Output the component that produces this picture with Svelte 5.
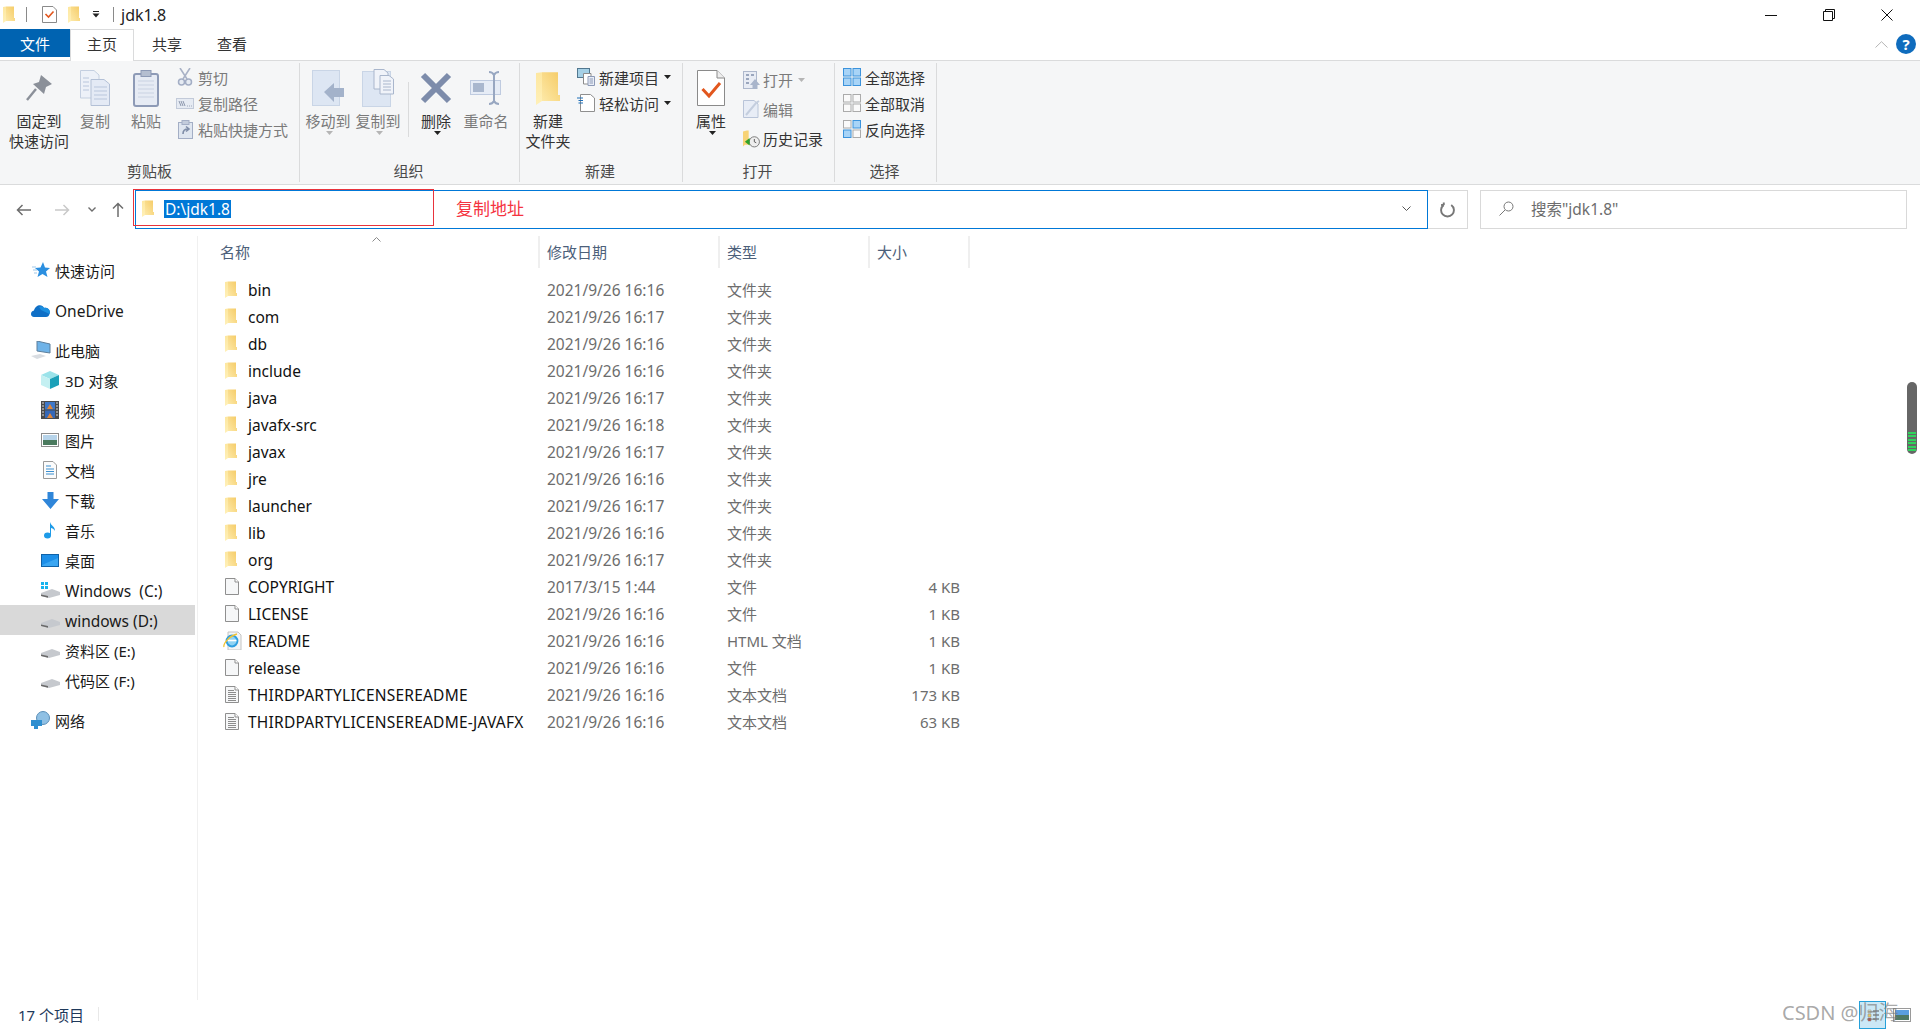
<script>
  const clipSmall = [
    { icon: 'scissors', text: '剪切' },
    { icon: 'copypath', text: '复制路径' },
    { icon: 'shortcut', text: '粘贴快捷方式' }
  ];

  const nav = [
    { icon: 'star', text: '快速访问', top: true },
    { icon: 'cloud', text: 'OneDrive', top: true, gap: true, latin: true },
    { icon: 'pc', text: '此电脑', top: true, gap: true },
    { icon: 'cube', text: '3D 对象' },
    { icon: 'film', text: '视频' },
    { icon: 'photo', text: '图片' },
    { icon: 'navdoc', text: '文档' },
    { icon: 'download', text: '下载' },
    { icon: 'music', text: '音乐' },
    { icon: 'desktop', text: '桌面' },
    { icon: 'cdrive', text: 'Windows  (C:)', latin: true },
    { icon: 'drive', text: 'windows (D:)', active: true, latin: true },
    { icon: 'drive', text: '资料区 (E:)' },
    { icon: 'drive', text: '代码区 (F:)' },
    { icon: 'network', text: '网络', top: true, gap: true }
  ];

  const files = [
    { name: 'bin', date: '2021/9/26 16:16', type: '文件夹', size: '', icon: 'folder' },
    { name: 'com', date: '2021/9/26 16:17', type: '文件夹', size: '', icon: 'folder' },
    { name: 'db', date: '2021/9/26 16:16', type: '文件夹', size: '', icon: 'folder' },
    { name: 'include', date: '2021/9/26 16:16', type: '文件夹', size: '', icon: 'folder' },
    { name: 'java', date: '2021/9/26 16:17', type: '文件夹', size: '', icon: 'folder' },
    { name: 'javafx-src', date: '2021/9/26 16:18', type: '文件夹', size: '', icon: 'folder' },
    { name: 'javax', date: '2021/9/26 16:17', type: '文件夹', size: '', icon: 'folder' },
    { name: 'jre', date: '2021/9/26 16:16', type: '文件夹', size: '', icon: 'folder' },
    { name: 'launcher', date: '2021/9/26 16:17', type: '文件夹', size: '', icon: 'folder' },
    { name: 'lib', date: '2021/9/26 16:16', type: '文件夹', size: '', icon: 'folder' },
    { name: 'org', date: '2021/9/26 16:17', type: '文件夹', size: '', icon: 'folder' },
    { name: 'COPYRIGHT', date: '2017/3/15 1:44', type: '文件', size: '4 KB', icon: 'blank' },
    { name: 'LICENSE', date: '2021/9/26 16:16', type: '文件', size: '1 KB', icon: 'blank' },
    { name: 'README', date: '2021/9/26 16:16', type: 'HTML 文档', size: '1 KB', icon: 'ie' },
    { name: 'release', date: '2021/9/26 16:16', type: '文件', size: '1 KB', icon: 'blank' },
    { name: 'THIRDPARTYLICENSEREADME', date: '2021/9/26 16:16', type: '文本文档', size: '173 KB', icon: 'text' },
    { name: 'THIRDPARTYLICENSEREADME-JAVAFX', date: '2021/9/26 16:16', type: '文本文档', size: '63 KB', icon: 'text' }
  ];
</script>

{#snippet folder(w, h)}
  <svg width={w} height={h} viewBox="0 0 12 17">
    <path d="M3 0.6 H11 V12 H12 V15 H3 Z" fill="url(#folderBody)" />
    <path d="M0 1 L3 0.6 V15 L0 17 Z" fill="url(#folderFill)" />
  </svg>
{/snippet}

{#snippet fileIcon(kind)}
  {#if kind === 'folder'}
    <span class="slot-pad">{@render folder(12, 17)}</span>
  {:else if kind === 'ie'}
    <svg width="19" height="19" viewBox="0 0 19 19">
      <path d="M5 1 H15 L18 4 V19 H5 Z" fill="#f4f5f6" stroke="#c4c4c4" />
      <circle cx="9" cy="10" r="5.4" fill="#8fd3f4" stroke="#2f9fe0" stroke-width="2" />
      <path d="M4.5 9.5 H13.5" stroke="#fff" stroke-width="1.6" />
      <path d="M1 16 C0 13 6 5 14 3" fill="none" stroke="#f2c230" stroke-width="1.3" />
    </svg>
  {:else}
    <svg class="slot-pad" width="14" height="17" viewBox="0 0 14 17">
      <path d="M0.5 0.5 H10 L13.5 4 V16.5 H0.5 Z" fill="#f6f7f8" stroke="#8f8f8f" />
      <path d="M10 0.5 V4 H13.5" fill="#fff" stroke="#8f8f8f" />
      {#if kind === 'text'}
        <path d="M3 4.5 H9 M3 6.5 H11 M3 8.5 H11 M3 10.5 H11 M3 12.5 H11 M3 14.5 H11" stroke="#8c8c8c" />
      {/if}
    </svg>
  {/if}
{/snippet}

{#snippet smallIcon(kind)}
  {#if kind === 'scissors'}
    <svg width="16" height="18" viewBox="0 0 16 18">
      <path d="M3 0 L10 11 M13 0 L6 11" stroke="#a9b2c6" stroke-width="1.6" fill="none" />
      <circle cx="4.5" cy="14" r="3" fill="#e6ebf3" stroke="#a3aec5" stroke-width="1.5" />
      <circle cx="11.5" cy="14" r="3" fill="#e6ebf3" stroke="#a3aec5" stroke-width="1.5" />
    </svg>
  {:else if kind === 'copypath'}
    <svg width="18" height="11" viewBox="0 0 18 11">
      <rect x="0.5" y="0.5" width="17" height="10" fill="#e6ebf3" stroke="#c2cad9" />
      <path d="M3 3 L5 8 M5 3 L7 8 M7 3 L9 8 M11 8 H11.8 M13 8 H13.8 M15 8 H15.8" stroke="#8c97ad" />
    </svg>
  {:else if kind === 'shortcut'}
    <svg width="15" height="19" viewBox="0 0 15 19">
      <rect x="0.5" y="2.5" width="14" height="16" fill="#dfe6f0" stroke="#a3aec5" />
      <rect x="4" y="0.5" width="7" height="4" fill="#c3ccdc" stroke="#a3aec5" />
      <path d="M5 14 C5 10 7 9 10 9 M8 6.5 L11 9 L8 11.5" fill="none" stroke="#7f8da8" stroke-width="1.6" />
    </svg>
  {:else if kind === 'newitem'}
    <svg width="18" height="18" viewBox="0 0 18 18">
      <rect x="0.5" y="0.5" width="12" height="9" fill="#a5d0e6" stroke="#51778f" />
      <path d="M6.5 5.5 H14 V16 H6.5 Z" fill="#fff" stroke="#8b8b8b" />
      <path d="M11 8.5 H17.5 V17.5 H11 Z" fill="#e8edf7" stroke="#8d9ab6" />
      <path d="M12.5 11 H16 M12.5 13 H16 M12.5 15 H16" stroke="#8d9ab6" />
    </svg>
  {:else if kind === 'easy'}
    <svg width="18" height="18" viewBox="0 0 18 18">
      <path d="M3.5 0.5 H13.5 L17.5 4 V17.5 H3.5 Z" fill="#fff" stroke="#8f8f8f" />
      <path d="M0 4 H6 M1.5 6.5 H6 M1.5 9 H6" stroke="#1f6fb8" stroke-width="1.2" />
    </svg>
  {:else if kind === 'open'}
    <svg width="17" height="18" viewBox="0 0 17 18">
      <rect x="0.5" y="0.5" width="13" height="17" fill="#e8ecf4" stroke="#aeb8cc" />
      <path d="M3 4 H6 M8 4 H11 M3 8 H6 M3 12 H6" stroke="#9aa6bd" stroke-width="2" />
      <path d="M7 14 L12 8 L17 14 H14.5 V18 H9.5 V14 Z" fill="#a9b5cb" />
    </svg>
  {:else if kind === 'edit'}
    <svg width="17" height="18" viewBox="0 0 17 18">
      <path d="M0.5 0.5 H11 L15 4 V17.5 H0.5 Z" fill="#e8edf6" stroke="#b9c4d8" />
      <path d="M3 15 L13 3 L16 1" fill="none" stroke="#c4cede" stroke-width="2" />
    </svg>
  {:else if kind === 'history'}
    <svg width="18" height="18" viewBox="0 0 18 18">
      <path d="M0 1 L4 0 H6 V9 H9 V15 H2 L0 17 Z" fill="#f7d376" />
      <circle cx="12" cy="12" r="5.4" fill="#eeeeee" stroke="#777" />
      <path d="M12 9 V12 L14 13" fill="none" stroke="#555" />
      <path d="M2 12 L7 8 V16 Z" fill="#2fa32a" />
    </svg>
  {:else if kind === 'all' || kind === 'none' || kind === 'invert'}
    <svg width="18" height="18" viewBox="0 0 18 18">
      <rect class:on={kind === 'all'} class:off={kind !== 'all'} x="0.5" y="0.5" width="7.5" height="7.5" />
      <rect class:on={kind === 'all' || kind === 'invert'} class:off={kind === 'none'} x="10" y="0.5" width="7.5" height="7.5" />
      <rect class:on={kind === 'all' || kind === 'invert'} class:off={kind === 'none'} x="0.5" y="10" width="7.5" height="7.5" />
      <rect class:on={kind === 'all'} class:off={kind !== 'all'} x="10" y="10" width="7.5" height="7.5" />
    </svg>
  {/if}
{/snippet}

{#snippet navIcon(kind)}
  {#if kind === 'star'}
    <svg width="18" height="16" viewBox="0 0 18 16">
      <path d="M11 0 L13 5.5 L18 6 L14 9.5 L15.5 15 L10.5 12 L5.5 15 L7 9.5 L3 6 L8.5 5.5 Z" fill="#2b8fe0" />
      <path d="M0 5 H4 M1 8 H5 M2 11 H5" stroke="#9fc7e8" />
    </svg>
  {:else if kind === 'cloud'}
    <svg width="20" height="13" viewBox="0 0 20 13">
      <path d="M3 13 C-1 13 -1 7 3 6.5 C4 1 11 -1 13 4 C17 3 20 7 18.5 10 C18 12 17 13 15 13 Z" fill="#0f6fc6" />
      <path d="M8 3 C10 1.5 12 2.5 13 4 C17 3 20 7 18.5 10 L10 6 Z" fill="#1c8fe0" />
    </svg>
  {:else if kind === 'pc'}
    <svg width="20" height="18" viewBox="0 0 20 18">
      <path d="M6 0 L19 3 V12 L6 10 Z" fill="#6fb3e8" stroke="#5d7f9c" />
      <path d="M0 15 L9 13 L15 15 L6 18 Z" fill="#d9dde2" />
    </svg>
  {:else if kind === 'cube'}
    <svg width="18" height="18" viewBox="0 0 18 18">
      <path d="M9 0 L18 4 L9 8 L0 4 Z" fill="#9be3ea" />
      <path d="M0 4 L9 8 V18 L0 14 Z" fill="#c4f0f2" />
      <path d="M18 4 L9 8 V18 L18 14 Z" fill="#1ba0b8" />
    </svg>
  {:else if kind === 'film'}
    <svg width="18" height="18" viewBox="0 0 18 18">
      <rect width="18" height="18" fill="#4a4a4a" />
      <rect x="4" y="1" width="10" height="7.5" fill="#3f78c8" />
      <rect x="4" y="9.5" width="10" height="7.5" fill="#3568b8" />
      <path d="M6 8 L9 3 L12 8 Z M6 17 L9 12 L12 17 Z" fill="#e0863a" />
      <path d="M1 2 H3 M1 5 H3 M1 8 H3 M1 11 H3 M1 14 H3 M15 2 H17 M15 5 H17 M15 8 H17 M15 11 H17 M15 14 H17" stroke="#ddd" />
    </svg>
  {:else if kind === 'photo'}
    <svg width="18" height="14" viewBox="0 0 18 14">
      <rect x="0.5" y="0.5" width="17" height="13" fill="#fff" stroke="#8d8d8d" />
      <rect x="2" y="2" width="14" height="5" fill="#b7d4ea" />
      <rect x="2" y="7" width="14" height="5" fill="#4a7a5e" />
    </svg>
  {:else if kind === 'navdoc'}
    <svg width="14" height="18" viewBox="0 0 14 18">
      <path d="M0.5 0.5 H10 L13.5 4 V17.5 H0.5 Z" fill="#fbfbfb" stroke="#9a9a9a" />
      <path d="M3 5 H8 M3 8 H11 M3 10.5 H11 M3 13 H11" stroke="#3a8fd0" />
    </svg>
  {:else if kind === 'download'}
    <svg width="17" height="17" viewBox="0 0 17 17">
      <path d="M5.5 0 H11.5 V7 H17 L8.5 17 L0 7 H5.5 Z" fill="#2f86d9" />
    </svg>
  {:else if kind === 'music'}
    <svg width="12" height="17" viewBox="0 0 12 17">
      <ellipse cx="3.5" cy="13.5" rx="3.5" ry="3" fill="#1d9be8" />
      <path d="M6 13 V0 C7 4 11 4 11 9 C10 7 8 6 7 6 V13 Z" fill="#1d9be8" />
    </svg>
  {:else if kind === 'desktop'}
    <svg width="18" height="13" viewBox="0 0 18 13">
      <rect x="0.5" y="0.5" width="17" height="12" fill="#1d8fe8" stroke="#0f62a8" />
      <path d="M1 11 L17 4 V12 H1 Z" fill="#3aa6f2" />
    </svg>
  {:else if kind === 'cdrive' || kind === 'drive'}
    <svg width="19" height="16" viewBox="0 0 19 16">
      {#if kind === 'cdrive'}
        <path d="M0 0 H3 V3 H0 Z M4 0 H7 V3 H4 Z M0 4 H3 V7 H0 Z M4 4 H7 V7 H4 Z" fill="#17b4ee" />
      {/if}
      <path d="M0 11 L11 7 L19 10 V13 L8 16 L0 14 Z" fill="#c6c9ce" />
      <path d="M0 12.5 L7 14 V15.8 L0 14 Z" fill="#6a6a6a" />
    </svg>
  {:else if kind === 'network'}
    <svg width="20" height="18" viewBox="0 0 20 18">
      <circle cx="12" cy="7" r="6.5" fill="#8fc0e4" stroke="#5b8fb8" />
      <path d="M0 9 H11 V15 H7 V18 H3 V15 H0 Z" fill="#2f8fd0" />
    </svg>
  {/if}
{/snippet}

<svg class="defs" width="0" height="0" aria-hidden="true">
  <defs>
    <linearGradient id="folderFill" x1="0" y1="1" x2="0" y2="0">
      <stop offset="0" stop-color="#fff0b8" />
      <stop offset="1" stop-color="#fde7a0" />
    </linearGradient>
    <linearGradient id="folderBody" x1="0" y1="1" x2="1" y2="0">
      <stop offset="0" stop-color="#fde9a8" />
      <stop offset="1" stop-color="#f5cb66" />
    </linearGradient>
  </defs>
</svg>

<div class="window">
  <div class="titlebar">
    <span class="qa first">{@render folder(12, 17)}</span>
    <i class="qa-sep"></i>
    <svg class="qa-check" width="15" height="17" viewBox="0 0 15 17">
      <path d="M0.5 0.5 H11 L14.5 4 V16.5 H0.5 Z" fill="#fff" stroke="#8a8a8a" />
      <path d="M3.5 8 L6.5 11 L11.5 5.5" fill="none" stroke="#e2571e" stroke-width="1.6" />
    </svg>
    <span class="qa second">{@render folder(12, 17)}</span>
    <svg class="qa-drop" width="8" height="7" viewBox="0 0 8 7">
      <path d="M1 0.5 H7" stroke="#222" />
      <path d="M0.5 2.5 H7.5 L4 6.5 Z" fill="#222" />
    </svg>
    <i class="qa-sep last"></i>
    <span class="title">jdk1.8</span>
    <div class="win-controls">
      <svg width="12" height="12" viewBox="0 0 12 12"><path d="M0 6.5 H12" stroke="#111" /></svg>
      <svg width="12" height="12" viewBox="0 0 12 12">
        <path d="M0.5 2.5 H9.5 V11.5 H0.5 Z M2.5 2.5 V0.5 H11.5 V9.5 H9.5" fill="none" stroke="#111" />
      </svg>
      <svg width="12" height="12" viewBox="0 0 12 12"><path d="M0.5 0.5 L11.5 11.5 M11.5 0.5 L0.5 11.5" stroke="#111" /></svg>
    </div>
  </div>

  <div class="tabs">
    <span class="tab file">文件</span>
    <span class="tab home">主页</span>
    <span class="tab share">共享</span>
    <span class="tab view">查看</span>
    <svg class="collapse" width="13" height="7" viewBox="0 0 13 7">
      <path d="M0.5 6.5 L6.5 0.7 L12.5 6.5" fill="none" stroke="#b5b5b5" />
    </svg>
    <span class="help">?</span>
  </div>

  <div class="ribbon">
    <section class="group clipboard">
      <div class="body">
        <div class="big pin">
          <div class="ico">
            <svg width="26" height="26" viewBox="0 0 26 26">
              <path d="M15 0 L26 9 L20 12 L18 19 L7 9 L13 7 Z" fill="#8b9099" />
              <path d="M10 14 L1 25" stroke="#8b9099" stroke-width="2.4" />
            </svg>
          </div>
          <span>固定到<br />快速访问</span>
        </div>
        <div class="big copy off-text">
          <div class="ico">
            <svg width="30" height="36" viewBox="0 0 30 36">
              <path d="M0.5 0.5 H14 L19 5 V28 H0.5 Z" fill="#edf1f8" stroke="#c4cfe0" />
              <path d="M11 9.5 H24 L29.5 14 V35.5 H11 Z" fill="#e4eaf5" stroke="#b3c0d6" />
              <path d="M3 8 H9 M3 12 H9 M3 16 H9 M3 20 H9 M14 17 H27 M14 21 H27 M14 25 H27 M14 29 H27" stroke="#b9c6dc" />
            </svg>
          </div>
          <span>复制</span>
        </div>
        <div class="big paste off-text">
          <div class="ico">
            <svg width="26" height="37" viewBox="0 0 26 37">
              <rect x="1" y="4" width="24" height="32" rx="2" fill="#e6ebf4" stroke="#8d9ab6" stroke-width="2" />
              <rect x="8" y="0.5" width="10" height="6" fill="#b4bed0" stroke="#8d9ab6" />
              <path d="M5 11 H21 M5 15 H21 M5 19 H21 M5 23 H21 M5 27 H21" stroke="#c9d2e2" />
            </svg>
          </div>
          <span>粘贴</span>
        </div>
        <div class="smalls clip-col off-text">
          {#each clipSmall as s}
            <div class="small">
              <span class="small-ico">{@render smallIcon(s.icon)}</span>
              <span>{s.text}</span>
            </div>
          {/each}
        </div>
      </div>
      <div class="group-label">剪贴板</div>
    </section>

    <section class="group organize">
      <div class="body">
        <div class="big wide off-text">
          <div class="ico">
            <svg width="32" height="36" viewBox="0 0 32 36">
              <rect x="0.5" y="0.5" width="27" height="35" fill="#dde6f3" stroke="#c9d5e6" />
              <path d="M12 22 L22 13 V18 H32 V27 H22 V32 Z" fill="#a3b2ca" />
            </svg>
          </div>
          <span>移动到</span>
          <svg class="caret light" width="7" height="4" viewBox="0 0 7 4"><path d="M0 0 H7 L3.5 4 Z" /></svg>
        </div>
        <div class="big wide off-text">
          <div class="ico">
            <svg width="32" height="38" viewBox="0 0 32 38">
              <rect x="0.5" y="2.5" width="28" height="35" fill="#dde6f3" stroke="#c9d5e6" />
              <path d="M12 0.5 H22 L26 4 V20 H12 Z" fill="#f0f3f9" stroke="#a9b6cc" />
              <path d="M18 6.5 H27 L31.5 10 V25 H18 Z" fill="#f0f3f9" stroke="#a9b6cc" />
              <path d="M21 12 H29 M21 15 H29 M21 18 H29 M21 21 H29" stroke="#a9b6cc" />
            </svg>
          </div>
          <span>复制到</span>
          <svg class="caret light" width="7" height="4" viewBox="0 0 7 4"><path d="M0 0 H7 L3.5 4 Z" /></svg>
        </div>
        <i class="inner-sep"></i>
        <div class="big wide">
          <div class="ico">
            <svg width="32" height="32" viewBox="0 0 32 32">
              <path d="M3 3 L29 29 M29 3 L3 29" stroke="#7d8cab" stroke-width="6" />
            </svg>
          </div>
          <span>删除</span>
          <svg class="caret" width="7" height="4" viewBox="0 0 7 4"><path d="M0 0 H7 L3.5 4 Z" /></svg>
        </div>
        <div class="big wide off-text">
          <div class="ico">
            <svg width="32" height="34" viewBox="0 0 32 34">
              <rect x="0.5" y="9.5" width="30" height="14" fill="#e6ecf6" stroke="#bfcbe0" />
              <rect x="3" y="12" width="11" height="9" fill="#a9b7ce" />
              <path d="M19 1 C22 1 23 2 24 4 C25 2 26 1 29 1 M24 4 V30 M19 33 C22 33 23 32 24 30 C25 32 26 33 29 33" fill="none" stroke="#98a7c1" stroke-width="2" />
            </svg>
          </div>
          <span>重命名</span>
        </div>
      </div>
      <div class="group-label">组织</div>
    </section>

    <section class="group new">
      <div class="body">
        <div class="big wide">
          <div class="ico">{@render folder(24, 34)}</div>
          <span>新建<br />文件夹</span>
        </div>
        <div class="smalls new-col">
          <div class="small">
            <span class="small-ico">{@render smallIcon('newitem')}</span>
            <span>新建项目</span>
            <svg class="drop" width="7" height="4" viewBox="0 0 7 4"><path d="M0 0 H7 L3.5 4 Z" /></svg>
          </div>
          <div class="small">
            <span class="small-ico">{@render smallIcon('easy')}</span>
            <span>轻松访问</span>
            <svg class="drop" width="7" height="4" viewBox="0 0 7 4"><path d="M0 0 H7 L3.5 4 Z" /></svg>
          </div>
        </div>
      </div>
      <div class="group-label">新建</div>
    </section>

    <section class="group open">
      <div class="body">
        <div class="big wide">
          <div class="ico">
            <svg width="28" height="36" viewBox="0 0 28 36">
              <path d="M0.5 0.5 H20 L27.5 8 V35.5 H0.5 Z" fill="#fff" stroke="#8a8a8a" />
              <path d="M20 0.5 V8 H27.5" fill="#eee" stroke="#8a8a8a" />
              <path d="M5.5 19 L12 26 L23 13" fill="none" stroke="#e2571e" stroke-width="3" />
            </svg>
          </div>
          <span>属性</span>
          <svg class="caret" width="7" height="4" viewBox="0 0 7 4"><path d="M0 0 H7 L3.5 4 Z" /></svg>
        </div>
        <div class="smalls open-col">
          <div class="small off-text">
            <span class="small-ico">{@render smallIcon('open')}</span>
            <span>打开</span>
            <svg class="drop light" width="7" height="4" viewBox="0 0 7 4"><path d="M0 0 H7 L3.5 4 Z" /></svg>
          </div>
          <div class="small off-text">
            <span class="small-ico">{@render smallIcon('edit')}</span>
            <span>编辑</span>
          </div>
          <div class="small">
            <span class="small-ico">{@render smallIcon('history')}</span>
            <span>历史记录</span>
          </div>
        </div>
      </div>
      <div class="group-label">打开</div>
    </section>

    <section class="group select">
      <div class="body">
        <div class="smalls select-col">
          <div class="small"><span class="small-ico">{@render smallIcon('all')}</span><span>全部选择</span></div>
          <div class="small"><span class="small-ico">{@render smallIcon('none')}</span><span>全部取消</span></div>
          <div class="small"><span class="small-ico">{@render smallIcon('invert')}</span><span>反向选择</span></div>
        </div>
      </div>
      <div class="group-label">选择</div>
    </section>
  </div>

  <div class="addressbar">
    <div class="nav-btns">
      <svg width="16" height="12" viewBox="0 0 16 12"><path d="M15 6 H1.5 M6.5 1 L1.5 6 L6.5 11" fill="none" stroke="#6d6d6d" stroke-width="1.5" /></svg>
      <svg width="16" height="12" viewBox="0 0 16 12"><path d="M1 6 H14.5 M9.5 1 L14.5 6 L9.5 11" fill="none" stroke="#c9c9c9" stroke-width="1.5" /></svg>
      <svg width="8" height="5" viewBox="0 0 8 5"><path d="M0.5 0.5 L4 4 L7.5 0.5" fill="none" stroke="#6d6d6d" stroke-width="1.4" /></svg>
      <svg width="12" height="15" viewBox="0 0 12 15"><path d="M6 15 V1.5 M1 6.5 L6 1.5 L11 6.5" fill="none" stroke="#6d6d6d" stroke-width="1.5" /></svg>
    </div>
    <div class="address">
      {@render folder(12, 17)}
      <span class="path">D:\jdk1.8</span>
      <span class="note">复制地址</span>
      <svg class="addr-drop" width="9" height="5" viewBox="0 0 9 5"><path d="M0.5 0.5 L4.5 4.5 L8.5 0.5" fill="none" stroke="#555" /></svg>
      <i class="red-box"></i>
    </div>
    <div class="refresh">
      <svg width="15" height="16" viewBox="0 0 14 15">
        <path d="M3.5 2.8 A6 6 0 1 0 10.5 2.8 M10.5 2.8 V0.5 M10.5 2.8 H13" fill="none" stroke="#777" stroke-width="1.8" transform="scale(-1 1) translate(-14 0)" />
      </svg>
    </div>
    <div class="search">
      <svg width="15" height="15" viewBox="0 0 15 15">
        <circle cx="9.5" cy="5.5" r="4.5" fill="none" stroke="#777" />
        <path d="M6 9 L0.5 14.5" stroke="#777" />
      </svg>
      <span>搜索"jdk1.8"</span>
    </div>
  </div>

  <div class="main">
    <aside class="sidebar">
      {#each nav as item}
        <div class="nav-item" class:top={item.top} class:gap={item.gap} class:active={item.active}>
          <span class="nav-ico">{@render navIcon(item.icon)}</span>
          <span class="nav-text" class:latin={item.latin}>{item.text}</span>
        </div>
      {/each}
    </aside>
    <div class="list">
      <div class="cols head">
        <span class="hcell name-h">名称</span>
        <span class="hcell">修改日期</span>
        <span class="hcell">类型</span>
        <span class="hcell">大小</span>
        <svg class="sort" width="9" height="5" viewBox="0 0 9 5"><path d="M0.5 4.5 L4.5 0.5 L8.5 4.5" fill="none" stroke="#8a8a8a" /></svg>
      </div>
      <div class="rows">
        {#each files as f}
          <div class="cols row">
            <div class="name">
              <span class="slot">{@render fileIcon(f.icon)}</span>
              <span class:long={f.icon === 'text'}>{f.name}</span>
            </div>
            <span class="meta date">{f.date}</span>
            <span class="meta">{f.type}</span>
            <span class="meta size">{f.size}</span>
          </div>
        {/each}
      </div>
    </div>
  </div>

  <div class="statusbar">
    <span>17 个项目</span>
    <i class="status-sep"></i>
    <span class="view-details">
      <svg width="14" height="16" viewBox="0 0 14 16">
        <path d="M2 3 H5 V6 H2 Z" fill="#d9e3c0" stroke="#999" stroke-width="0.6" />
        <path d="M2 7 H5 V10 H2 Z" fill="#e8c860" stroke="#999" stroke-width="0.6" />
        <path d="M2 11 H5 V14 H2 Z" fill="#c8342a" stroke="#999" stroke-width="0.6" />
        <path d="M7 4 H13 M7 8 H13 M7 12 H13" stroke="#555" />
      </svg>
    </span>
    <svg class="view-thumbs" width="18" height="14" viewBox="0 0 18 14">
      <rect x="0.5" y="0.5" width="17" height="13" fill="#fff" stroke="#9a9a9a" />
      <rect x="2" y="2" width="14" height="5" fill="#5a9fe0" />
      <rect x="2" y="7" width="14" height="5" fill="#4f7a66" />
    </svg>
    <span class="watermark">CSDN @归海</span>
  </div>

  <div class="scroll-pill">
    <div class="stripes"></div>
  </div>
</div>

<style>
  :global(body) {
    margin: 0;
    background: #fff;
  }

  .defs {
    position: absolute;
  }

  .window {
    position: relative;
    display: flex;
    flex-direction: column;
    height: 1030px;
    overflow: hidden;
    font-family: "Noto Sans", "Noto Sans CJK SC", sans-serif;
    font-size: 15px;
    color: #1a1a1a;
    background: #fff;
  }

  i {
    display: block;
  }

  .titlebar {
    display: flex;
    align-items: center;
    height: 29px;
    flex: none;
  }

  .qa {
    display: flex;
  }

  .first {
    margin-left: 3px;
  }

  .qa-sep {
    width: 1px;
    height: 15px;
    background: #8a8a8a;
    margin-left: 11px;
  }

  .qa-check {
    margin-left: 15px;
  }

  .second {
    margin-left: 11px;
  }

  .qa-drop {
    margin-left: 12px;
  }

  .qa-sep.last {
    margin-left: 13px;
  }

  .title {
    margin-left: 7px;
    font-size: 16px;
    color: #222;
  }

  .win-controls {
    margin-left: auto;
    display: flex;
    gap: 46px;
    padding-right: 27px;
  }

  .tabs {
    position: relative;
    display: flex;
    height: 31px;
    flex: none;
  }

  .tab {
    display: flex;
    align-items: center;
    justify-content: center;
    height: 28px;
    color: #333;
  }

  .file {
    width: 70px;
    background: #0063b1;
    color: #fff;
  }

  .home {
    width: 64px;
    height: 32px;
    box-sizing: border-box;
    padding-bottom: 4px;
    border: 1px solid #dadbdc;
    border-bottom: 0;
    background: #fff;
    position: relative;
    z-index: 1;
  }

  .share {
    width: 66px;
  }

  .view {
    width: 64px;
  }

  .collapse {
    position: absolute;
    right: 32px;
    top: 12px;
  }

  .help {
    position: absolute;
    right: 4px;
    top: 5px;
    width: 20px;
    height: 20px;
    border-radius: 50%;
    background: #0f6cbd;
    color: #fff;
    font-size: 15px;
    font-weight: 700;
    line-height: 20px;
    text-align: center;
  }

  .ribbon {
    display: flex;
    height: 123px;
    flex: none;
    background: #f5f6f7;
    border-top: 1px solid #dadbdc;
    border-bottom: 1px solid #dadbdc;
    color: #333;
  }

  .group {
    display: flex;
    flex-direction: column;
    justify-content: space-between;
    box-sizing: border-box;
    margin: 2px 0;
    border-right: 1px solid #dadbdc;
  }

  .clipboard {
    width: 300px;
  }

  .organize {
    width: 220px;
  }

  .new {
    width: 163px;
  }

  .open {
    width: 152px;
  }

  .select {
    width: 102px;
  }

  .body {
    display: flex;
    padding-left: 3px;
  }

  .group-label {
    height: 20px;
    line-height: 18px;
    padding-right: 2px;
    text-align: center;
    font-size: 15px;
    color: #4a4a4a;
  }

  .clipboard .group-label {
    padding-right: 0;
  }

  .big {
    position: relative;
    display: flex;
    flex-direction: column;
    align-items: center;
    padding-top: 3px;
    line-height: 20px;
    text-align: center;
  }

  .ico {
    display: flex;
    align-items: center;
    justify-content: center;
    height: 44px;
    margin-bottom: 1px;
  }

  .pin {
    width: 72px;
  }

  .copy {
    width: 40px;
  }

  .paste {
    width: 52px;
    margin-left: 5px;
  }

  .wide {
    width: 50px;
  }

  .off-text {
    color: #7a7a7a;
  }

  .caret {
    position: absolute;
    top: 68px;
    left: 23px;
    fill: #222;
  }

  .caret.light {
    fill: #b5b5b5;
  }

  .inner-sep {
    width: 1px;
    height: 55px;
    margin: 19px 2px 0 5px;
    background: #dadbdc;
  }

  .smalls {
    display: flex;
    flex-direction: column;
    margin-top: 1px;
  }

  .small {
    display: flex;
    align-items: center;
    height: 26px;
    white-space: nowrap;
  }

  .small-ico {
    display: flex;
    justify-content: center;
    width: 18px;
    margin-right: 4px;
  }

  .drop {
    margin-left: 5px;
    fill: #222;
  }

  .drop.light {
    fill: #b5b5b5;
  }

  .clip-col {
    margin-left: 4px;
  }

  .new-col {
    margin-left: 4px;
  }

  .open-col {
    margin-left: 7px;
    margin-top: 2px;
  }

  .open-col .small {
    height: 29.5px;
  }

  .open-col .small-ico {
    width: 17px;
    margin-right: 3px;
  }

  .select-col {
    margin-left: 5px;
  }

  .on {
    fill: #a8d4f7;
    stroke: #3c93dc;
  }

  .off {
    fill: #fafafa;
    stroke: #ababab;
  }

  .addressbar {
    display: flex;
    align-items: flex-start;
    height: 49px;
    flex: none;
    padding-top: 5px;
    box-sizing: border-box;
  }

  .nav-btns {
    display: flex;
    align-items: center;
    gap: 0;
    width: 135px;
    height: 39px;
    box-sizing: border-box;
    padding-left: 16px;
  }

  .nav-btns svg:nth-child(2) {
    margin-left: 22px;
  }

  .nav-btns svg:nth-child(3) {
    margin-left: 18px;
  }

  .nav-btns svg:nth-child(4) {
    margin-left: 16px;
  }

  .address {
    position: relative;
    display: flex;
    align-items: center;
    width: 1293px;
    height: 39px;
    box-sizing: border-box;
    border: 1px solid #0078d7;
    padding: 0 0 2px 6px;
  }

  .path {
    margin-left: 10px;
    padding: 0 1px;
    background: #0078d7;
    color: #fff;
    font-size: 15.5px;
    line-height: 18px;
  }

  .note {
    margin-left: 225px;
    margin-bottom: 2px;
    color: #f5333f;
    font-size: 17px;
  }

  .addr-drop {
    margin-left: auto;
    margin-right: 16px;
  }

  .red-box {
    position: absolute;
    left: -3px;
    top: -2px;
    width: 299px;
    height: 35px;
    border: 1px solid #e8333c;
  }

  .refresh {
    display: flex;
    align-items: center;
    justify-content: center;
    width: 40px;
    height: 39px;
    box-sizing: border-box;
    border: 1px solid #d9d9d9;
    border-left: 0;
  }

  .search {
    display: flex;
    align-items: center;
    gap: 17px;
    width: 427px;
    height: 39px;
    margin-left: 12px;
    box-sizing: border-box;
    border: 1px solid #d9d9d9;
    padding: 0 0 2px 18px;
    font-size: 15.5px;
    color: #6d6d6d;
  }

  .main {
    display: flex;
    flex: 1;
    min-height: 0;
    padding-top: 2px;
  }

  .sidebar {
    width: 198px;
    flex: none;
    box-sizing: border-box;
    padding-top: 19px;
    padding-right: 2px;
    border-right: 1px solid #f0f0f0;
  }

  .nav-item {
    display: flex;
    align-items: center;
    height: 30px;
    padding-left: 40px;
    gap: 5px;
  }

  .nav-item.top {
    padding-left: 31px;
    gap: 4px;
  }

  .nav-item.gap {
    margin-top: 10px;
  }

  .nav-item.active {
    background: #d9d9d9;
  }

  .nav-ico {
    display: flex;
    align-items: center;
    justify-content: center;
    width: 20px;
  }

  .nav-text {
    white-space: pre;
  }

  .nav-text.latin {
    padding-top: 2px;
    font-size: 15.5px;
  }

  .list {
    flex: 1;
    min-width: 0;
  }

  .cols {
    display: grid;
    grid-template-columns: 342px 180px 150px 100px;
  }

  .head {
    position: relative;
    height: 32px;
    align-items: stretch;
  }

  .hcell {
    display: flex;
    align-items: center;
    padding: 0 0 2px 7px;
    border-right: 2px solid #efefef;
    color: #4c607a;
    box-sizing: border-box;
  }

  .name-h {
    padding-left: 22px;
  }

  .sort {
    position: absolute;
    left: 174px;
    top: 1px;
  }

  .rows {
    padding-top: 8px;
  }

  .row {
    height: 27px;
    align-items: center;
  }

  .name {
    display: flex;
    align-items: center;
    padding-left: 27px;
    white-space: nowrap;
    font-size: 15.5px;
    color: #111;
  }

  .long {
    letter-spacing: 0.22px;
  }

  .slot {
    display: flex;
    align-items: center;
    width: 25px;
    margin-left: -2px;
  }

  .slot-pad {
    display: flex;
    margin-left: 2px;
  }

  .meta {
    padding-left: 7px;
    color: #6d6d6d;
    white-space: nowrap;
  }

  .meta.date {
    font-size: 15.5px;
  }

  .size {
    padding-left: 0;
    padding-right: 10px;
    text-align: right;
  }

  .statusbar {
    position: relative;
    display: flex;
    align-items: center;
    height: 30px;
    flex: none;
    box-sizing: border-box;
    padding: 0 0 2px 18px;
    color: #1e395b;
  }

  .status-sep {
    width: 1px;
    height: 14px;
    margin-left: 14px;
    background: #e8e8e8;
  }

  .watermark {
    position: absolute;
    left: 1782px;
    top: -3px;
    font-size: 20px;
    color: rgba(120, 120, 120, 0.65);
    white-space: nowrap;
  }

  .view-details {
    position: absolute;
    left: 1859px;
    top: 1px;
    display: flex;
    align-items: center;
    justify-content: center;
    width: 27px;
    height: 28px;
    box-sizing: border-box;
    border: 1px solid #26a0da;
    background: #cbe8f6;
  }

  .view-thumbs {
    position: absolute;
    left: 1893px;
    top: 8px;
  }

  .scroll-pill {
    position: absolute;
    left: 1907px;
    top: 382px;
    width: 10px;
    height: 72px;
    border-radius: 5px;
    background: #666;
  }

  .stripes {
    position: absolute;
    left: 1px;
    right: 1px;
    top: 50px;
    height: 19px;
    background: repeating-linear-gradient(#2fd35c 0 2px, #666 2px 3.5px);
  }
</style>
